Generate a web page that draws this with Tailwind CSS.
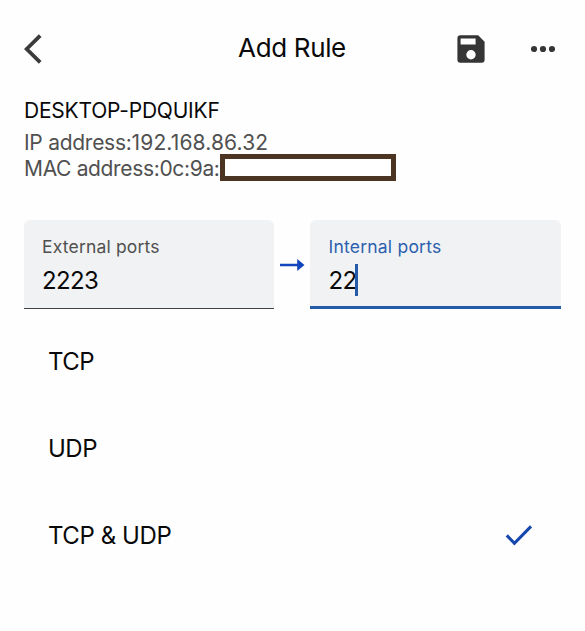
<!DOCTYPE html>
<html lang="en">
<head>
<meta charset="utf-8">
<title>Add Rule</title>
<script src="https://cdn.jsdelivr.net/npm/@tailwindcss/browser@4"></script>
</head>
<body class="w-[585px] h-[631px] overflow-hidden bg-[#fefefe] font-['Inter',sans-serif] text-[#090909]">
<header class="grid grid-cols-[1fr_auto_1fr] items-center h-[96px] pl-[24px] pr-[30px]">
  <svg class="w-[20px] h-[30px] mt-[2px]" viewBox="0 0 20 30" fill="none" stroke="#3b3b3b" stroke-width="3.8"><path d="M16.2 1.6 2.7 15 16.2 28.4"/></svg>
  <h1 class="pl-[5px] text-[26px] leading-[32px] tracking-[-0.35px] whitespace-nowrap"><span>Add Rule</span></h1>
  <div class="flex items-center justify-end gap-[46px] mt-[2px]">
    <svg class="w-[28px] h-[28px]" viewBox="0 0 28 28" fill="#353535"><path fill-rule="evenodd" d="M3 .3H21.2L27.6 6.7V24.8Q27.6 27.7 24.6 27.7H3.3Q.4 27.7.4 24.8V3.2Q.4.3 3.3.3ZM3.6 3.4V9.6H18.6V3.4ZM14 15.1A4.7 4.7 0 1 0 14 24.5 4.7 4.7 0 0 0 14 15.1Z"/></svg>
    <svg class="w-[24px] h-[8px]" viewBox="0 0 24 8" fill="#353535"><circle cx="3" cy="4" r="3.1"/><circle cx="12" cy="4" r="3.1"/><circle cx="21" cy="4" r="3.1"/></svg>
  </div>
</header>
<main>
  <section class="pl-[24px] text-[21px] leading-[26px] text-[#505050] whitespace-nowrap">
    <h2 class="pt-[2px] text-[#090909] tracking-[-0.22px]"><span>DESKTOP-PDQUIKF</span></h2>
    <p class="mt-[6px]"><span class="tracking-[-0.27px]">IP address:</span><span class="tracking-[0.14px]">192.168.86.32</span></p>
    <div class="flex items-center h-[26px]"><p class="w-[195.5px] tracking-[-0.34px]"><span>MAC address:0c:9a:</span></p><div class="w-[176px] h-[27px] mt-[-4px] border-[5px] border-[#4b3522] bg-white"></div></div>
  </section>
  <section class="flex mt-[38px] pl-[24px]">
    <label class="w-[250px] h-[89px] pl-[18px] pt-[15px] bg-[#f1f2f4] rounded-t-[6px] border-b-[1.5px] border-[#444]">
      <span class="block w-max text-[17.5px] leading-[24px] tracking-[0.18px] text-[#505050]">External ports</span>
      <span class="block w-max mt-[7px] text-[24px] leading-[30px] tracking-[-0.6px]">2223</span>
    </label>
    <div class="w-[36px] flex justify-center items-center">
      <svg class="w-[26px] h-[14px]" viewBox="0 0 26 14" fill="#1145bd"><path d="M1 5.8H18.2V1L25.5 7 18.2 13V8.2H1Z"/></svg>
    </div>
    <label class="w-[251px] h-[89px] pl-[18.5px] pt-[15px] bg-[#f1f2f4] rounded-t-[6px] border-b-[3px] border-[#235ba8]">
      <span class="block w-max text-[17.5px] leading-[24px] tracking-[0.22px] text-[#2c60ae]">Internal ports</span>
      <span class="flex items-center mt-[7px] text-[24px] leading-[30px]"><span class="w-[26px] tracking-[-0.6px]">22</span><span class="w-[3px] h-[32px] mt-[-2px] mb-0 bg-[#235ba8]"></span></span>
    </label>
  </section>
  <ul class="mt-[9px] pl-[48px] text-[24px] tracking-[-0.5px]">
    <li class="h-[87px] flex items-center"><span>TCP</span></li>
    <li class="h-[87px] flex items-center"><span>UDP</span></li>
    <li class="h-[87px] flex items-center justify-between pr-[52px]"><span class="tracking-[-0.42px]">TCP &amp; UDP</span>
      <svg class="w-[28px] h-[22px]" viewBox="0 0 28 22" fill="none" stroke="#1647ae" stroke-width="3"><path d="M1.8 10.4 9.4 18.4 26 1.4"/></svg>
    </li>
  </ul>
</main>
</body>
</html>
